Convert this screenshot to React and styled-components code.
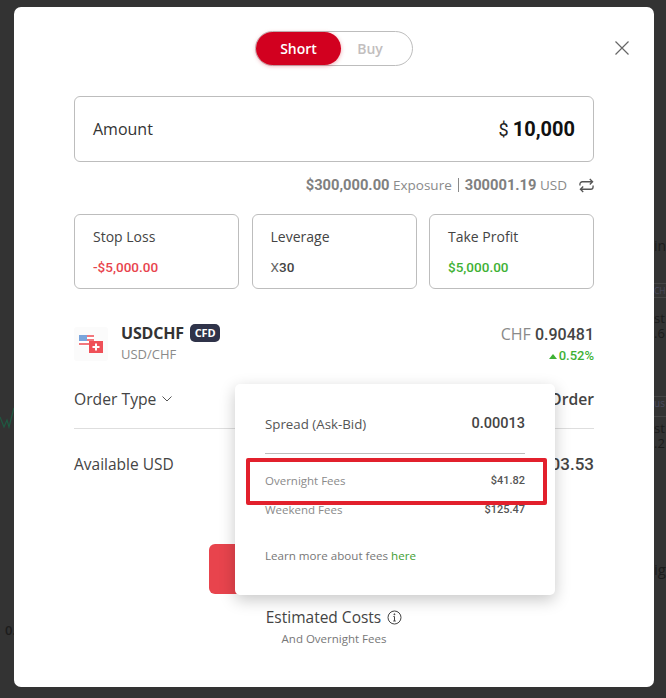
import React from "react";
import styled, { createGlobalStyle } from "styled-components";

const Global = createGlobalStyle`
  html, body {
    margin: 0;
    padding: 0;
    background: #333333;
  }
  * {
    box-sizing: border-box;
  }
`;

const sans = `"Open Sans", "Noto Sans", sans-serif`;
const nums = `"Roboto", "Liberation Sans", sans-serif`;

const Page = styled.div`
  position: relative;
  width: 666px;
  height: 698px;
  overflow: hidden;
  background: #333333;
  padding: 7px 12px 11px 14px;
`;

const BehindText = styled.span`
  position: absolute;
  left: ${(p) => p.$x}px;
  top: ${(p) => p.$y}px;
  font-family: ${sans};
  font-size: ${(p) => p.$size || 13}px;
  font-weight: ${(p) => p.$weight || 400};
  color: ${(p) => p.$color || "#1c1c1c"};
  line-height: ${(p) => (p.$lines ? "15px" : 1)};
  white-space: pre-line;
`;

const BehindLine = styled.i`
  position: absolute;
  left: 654px;
  top: ${(p) => p.$y}px;
  width: 12px;
  height: 1px;
  background: #454545;
`;

const BehindChart = styled.svg`
  position: absolute;
  left: 0;
  top: 406px;
`;

const Modal = styled.div`
  position: relative;
  z-index: 1;
  width: 640px;
  height: 680px;
  background: #fff;
  border-radius: 7px;
  padding: 24px 60px 0;
  display: flex;
  flex-direction: column;
  color: #333;
  font-family: ${sans};
`;

const CloseButton = styled.button`
  position: absolute;
  top: 33px;
  right: 24px;
  width: 16px;
  height: 16px;
  padding: 0;
  border: 0;
  background: none;
  color: #666;
  display: flex;
`;

const Toggle = styled.div`
  align-self: center;
  width: 158px;
  height: 35px;
  border: 1px solid #bdbdbd;
  border-radius: 18px;
  display: flex;
  align-items: center;
  margin-bottom: 30px;
`;

const ToggleOption = styled.div`
  height: 33px;
  width: ${(p) => (p.$active ? "85px" : "58px")};
  border-radius: 17px;
  display: flex;
  align-items: center;
  justify-content: center;
  font-size: 14px;
  font-weight: 600;
  color: ${(p) => (p.$active ? "#fff" : "#c2bebe")};
  background: ${(p) => (p.$active ? "#d2001f" : "transparent")};
  box-shadow: ${(p) => (p.$active ? "0 1px 4px rgba(210,0,31,.35)" : "none")};
`;

const AmountBox = styled.div`
  height: 66px;
  border: 1px solid #bdbdbd;
  border-radius: 6px;
  padding: 0 18px;
  display: flex;
  align-items: center;
  justify-content: space-between;
`;

const AmountLabel = styled.span`
  font-size: 16px;
  color: #333;
`;

const AmountValue = styled.span`
  font-family: ${nums};
  font-size: 18px;
  color: #222;
  strong {
    font-size: 20px;
    font-weight: 700;
    color: #111;
    margin-left: 4px;
  }
`;

const ExposureRow = styled.div`
  height: 52px;
  display: flex;
  align-items: center;
  justify-content: flex-end;
  color: #8a8a8a;
  font-size: 13.500px;
  padding-bottom: 6px;
`;

const ExposureBold = styled.b`
  font-family: ${nums};
  font-size: 14.700px;
  font-weight: 700;
  color: #808080;
`;

const Pipe = styled.span`
  width: 1px;
  height: 14px;
  background: #8a8a8a;
  margin: 0 6px;
`;

const SwapIcon = styled.span`
  display: flex;
  margin-left: 12px;
  color: #555;
`;

const Cards = styled.div`
  display: grid;
  grid-template-columns: 165px 165px 165px;
  justify-content: space-between;
`;

const Card = styled.div`
  height: 75px;
  border: 1px solid #bdbdbd;
  border-radius: 6px;
  padding: 12px 18px 0;
`;

const CardTitle = styled.div`
  font-size: 14px;
  line-height: 20px;
  color: #444;
`;

const CardValue = styled.div`
  margin-top: 10px;
  font-family: ${nums};
  font-size: 13.500px;
  line-height: 20px;
  font-weight: 500;
  color: ${(p) => p.$color || "#444"};
  span {
    font-weight: 400;
    color: #666;
  }
`;

const Instrument = styled.div`
  margin-top: 31px;
  height: 46px;
  display: flex;
  align-items: flex-start;
  justify-content: space-between;
`;

const InstrumentLeft = styled.div`
  display: flex;
  align-items: flex-start;
`;

const FlagTile = styled.div`
  width: 34px;
  height: 34px;
  margin: 7px 13px 0 0;
  border-radius: 3px;
  background: #fbfbfb;
  display: flex;
  align-items: center;
  justify-content: center;
`;

const SymbolLine = styled.div`
  display: flex;
  align-items: center;
  height: 24px;
  margin-top: 1px;
  font-size: 16px;
  font-weight: 700;
  letter-spacing: -0.2px;
  color: #333;
`;

const Badge = styled.span`
  margin-left: 6px;
  padding: 0 5px;
  height: 18px;
  line-height: 18px;
  border-radius: 5px;
  background: #2f3349;
  color: #fff;
  font-size: 11px;
  font-weight: 700;
`;

const SubSymbol = styled.div`
  font-size: 13px;
  line-height: 18px;
  color: #8a8a8a;
`;

const Quote = styled.div`
  text-align: right;
  padding-top: 2px;
`;

const QuotePrice = styled.div`
  font-size: 16px;
  line-height: 24px;
  color: #8a8a8a;
  b {
    font-family: ${nums};
    font-weight: 500;
    color: #444;
  }
`;

const QuoteChange = styled.div`
  font-family: ${nums};
  font-size: 13px;
  font-weight: 500;
  line-height: 18px;
  color: #3eb134;
  display: flex;
  align-items: center;
  justify-content: flex-end;
  gap: 2px;
`;

const UpArrow = styled.i`
  width: 0;
  height: 0;
  border-left: 4px solid transparent;
  border-right: 4px solid transparent;
  border-bottom: 5px solid #3eb134;
`;

const OrderRow = styled.div`
  margin-top: 8px;
  height: 55px;
  padding-bottom: 5px;
  border-bottom: 1px solid #dedede;
  display: flex;
  align-items: center;
  justify-content: space-between;
  font-size: 15.700px;
  color: #444;
`;

const OrderType = styled.span`
  display: flex;
  align-items: center;
  gap: 6px;
`;

const OrderRight = styled.span`
  font-weight: 600;
`;

const AvailableRow = styled.div`
  margin-top: 23px;
  height: 24px;
  display: flex;
  align-items: center;
  justify-content: space-between;
  font-size: 15.500px;
  color: #444;
`;

const AvailableValue = styled.span`
  font-family: ${nums};
  font-size: 17px;
  font-weight: 500;
`;

const SubmitButton = styled.div`
  align-self: center;
  margin-top: 68px;
  width: 250px;
  height: 50px;
  border-radius: 6px;
  background: #e8444d;
`;

const Estimated = styled.div`
  margin-top: 11px;
  display: flex;
  flex-direction: column;
  align-items: center;
`;

const EstimatedTitle = styled.div`
  font-size: 15.500px;
  line-height: 24px;
  color: #444;
  display: flex;
  align-items: center;
  gap: 6px;
`;

const EstimatedSub = styled.div`
  font-size: 11.500px;
  line-height: 20px;
  color: #777;
`;

const Popover = styled.div`
  position: absolute;
  left: 221px;
  top: 377px;
  width: 320px;
  height: 211px;
  background: #fff;
  border-radius: 5px;
  box-shadow: 0 5px 16px rgba(0, 0, 0, 0.22);
  padding: 28px 30px 0;
`;

const SpreadRow = styled.div`
  height: 42px;
  border-bottom: 1px solid #bdbdbd;
  display: flex;
  justify-content: space-between;
  font-size: 13.300px;
  line-height: 24px;
  color: #555;
`;

const SpreadValue = styled.span`
  font-family: ${nums};
  font-size: 14.500px;
  font-weight: 500;
  color: #444;
`;

const FeeRow = styled.div`
  height: 29px;
  display: flex;
  align-items: center;
  justify-content: space-between;
  font-size: 11.500px;
  color: #8a8a8a;
`;

const FeeValue = styled.span`
  font-family: ${nums};
  font-size: 11px;
  font-weight: 500;
  color: #555;
`;

const Fees = styled.div`
  margin-top: 12px;
`;

const LearnMore = styled.div`
  margin-top: 24px;
  font-size: 11.600px;
  line-height: 16px;
  color: #777;
  a {
    color: #3f9e33;
  }
`;

const Highlight = styled.div`
  position: absolute;
  left: 11px;
  top: 74px;
  width: 301px;
  height: 47px;
  border: 4px solid #e2202c;
  border-radius: 2px;
`;

const leftovers = [
  { x: 654, y: 239, text: "in", size: 14 },
  { x: 654, y: 287, text: "CH", size: 8.500, color: "#4a4a5e" },
  { x: 654, y: 311, text: "st\n.6", size: 13, lines: true },
  { x: 654, y: 398, text: "us", size: 10, color: "#4a4a5e" },
  { x: 654, y: 421, text: "st\n.2", size: 13, lines: true },
  { x: 654, y: 562, text: "ig", size: 15 },
  { x: 5, y: 624, text: "0.", size: 13, weight: 600 },
];

const App = () => {
  return (
    <Page>
      <Global />
      {leftovers.map((item) => (
        <BehindText
          key={item.y + item.text}
          $x={item.x}
          $y={item.y}
          $size={item.size}
          $color={item.color}
          $weight={item.weight}
          $lines={item.lines}
        >
          {item.text}
        </BehindText>
      ))}
      <BehindLine $y={283} />
      <BehindLine $y={297} />
      <BehindLine $y={396} />
      <BehindLine $y={416} />
      <BehindChart width="14" height="24" viewBox="0 0 14 24" fill="none" stroke="#1f5a42" strokeWidth="1.2">
        <path d="M0 11 4 21 7 14 9 21 14 2" />
      </BehindChart>

      <Modal>
        <CloseButton aria-label="Close">
          <svg width="16" height="16" viewBox="0 0 16 16" fill="none" stroke="currentColor" strokeWidth="1.2">
            <path d="M1.500 1.500 14.500 14.500M14.500 1.500 1.500 14.500" />
          </svg>
        </CloseButton>

        <Toggle>
          <ToggleOption $active>Short</ToggleOption>
          <ToggleOption>Buy</ToggleOption>
        </Toggle>

        <AmountBox>
          <AmountLabel>Amount</AmountLabel>
          <AmountValue>
            $<strong>10,000</strong>
          </AmountValue>
        </AmountBox>

        <ExposureRow>
          <ExposureBold>$300,000.00</ExposureBold>
          &nbsp;Exposure
          <Pipe />
          <ExposureBold>300001.19</ExposureBold>
          &nbsp;USD
          <SwapIcon>
            <svg width="15" height="15" viewBox="0 0 16 16" fill="none" stroke="currentColor" strokeWidth="1.4">
              <path d="M1 8V6.500A2.500 2.500 0 0 1 3.500 4H14M11.500 1 14.500 4 11.500 7M15 8v1.500A2.500 2.500 0 0 1 12.500 12H2M4.500 9 1.500 12 4.500 15" />
            </svg>
          </SwapIcon>
        </ExposureRow>

        <Cards>
          <Card>
            <CardTitle>Stop Loss</CardTitle>
            <CardValue $color="#e8444d">-$5,000.00</CardValue>
          </Card>
          <Card>
            <CardTitle>Leverage</CardTitle>
            <CardValue>
              <span>X</span>30
            </CardValue>
          </Card>
          <Card>
            <CardTitle>Take Profit</CardTitle>
            <CardValue $color="#3eb134">$5,000.00</CardValue>
          </Card>
        </Cards>

        <Instrument>
          <InstrumentLeft>
            <FlagTile>
              <svg width="24" height="18" viewBox="0 0 24 18">
                <rect x="0" y="0" width="15" height="11" fill="#fff" />
                <rect x="0" y="0" width="15" height="2" fill="#f2777c" />
                <rect x="0" y="4" width="15" height="2" fill="#f2777c" />
                <rect x="0" y="8" width="15" height="2" fill="#f2777c" />
                <rect x="0" y="0" width="8" height="6" fill="#7aa5dc" />
                <rect x="10" y="6" width="14" height="12" fill="#ef5058" />
                <path d="M16 8.500h2v2.500h2.500v2H18v2.500h-2V13h-2.500v-2H16z" fill="#fff" />
              </svg>
            </FlagTile>
            <div>
              <SymbolLine>
                USDCHF
                <Badge>CFD</Badge>
              </SymbolLine>
              <SubSymbol>USD/CHF</SubSymbol>
            </div>
          </InstrumentLeft>
          <Quote>
            <QuotePrice>
              CHF <b>0.90481</b>
            </QuotePrice>
            <QuoteChange>
              <UpArrow />
              0.52%
            </QuoteChange>
          </Quote>
        </Instrument>

        <OrderRow>
          <OrderType>
            Order Type
            <svg width="10" height="6" viewBox="0 0 10 6" fill="none" stroke="#555" strokeWidth="1">
              <path d="M.500.500 5 5 9.500.500" />
            </svg>
          </OrderType>
          <OrderRight>Market Order</OrderRight>
        </OrderRow>

        <AvailableRow>
          <span>Available USD</span>
          <AvailableValue>12,503.53</AvailableValue>
        </AvailableRow>

        <SubmitButton />

        <Estimated>
          <EstimatedTitle>
            Estimated Costs
            <svg width="15" height="15" viewBox="0 0 15 15" fill="none" stroke="#444" strokeWidth="1">
              <circle cx="7.500" cy="7.500" r="6.500" />
              <path d="M7.500 6.500v4.500M6.200 11h2.600M6.400 6.500h1.100" />
              <circle cx="7.400" cy="4.300" r=".5" fill="#444" />
            </svg>
          </EstimatedTitle>
          <EstimatedSub>And Overnight Fees</EstimatedSub>
        </Estimated>

        <Popover>
          <SpreadRow>
            <span>Spread (Ask-Bid)</span>
            <SpreadValue>0.00013</SpreadValue>
          </SpreadRow>
          <Fees>
            <FeeRow>
              <span>Overnight Fees</span>
              <FeeValue>$41.82</FeeValue>
            </FeeRow>
            <FeeRow>
              <span>Weekend Fees</span>
              <FeeValue>$125.47</FeeValue>
            </FeeRow>
          </Fees>
          <LearnMore>
            Learn more about fees <a>here</a>
          </LearnMore>
          <Highlight />
        </Popover>
      </Modal>
    </Page>
  );
};

export default App;
